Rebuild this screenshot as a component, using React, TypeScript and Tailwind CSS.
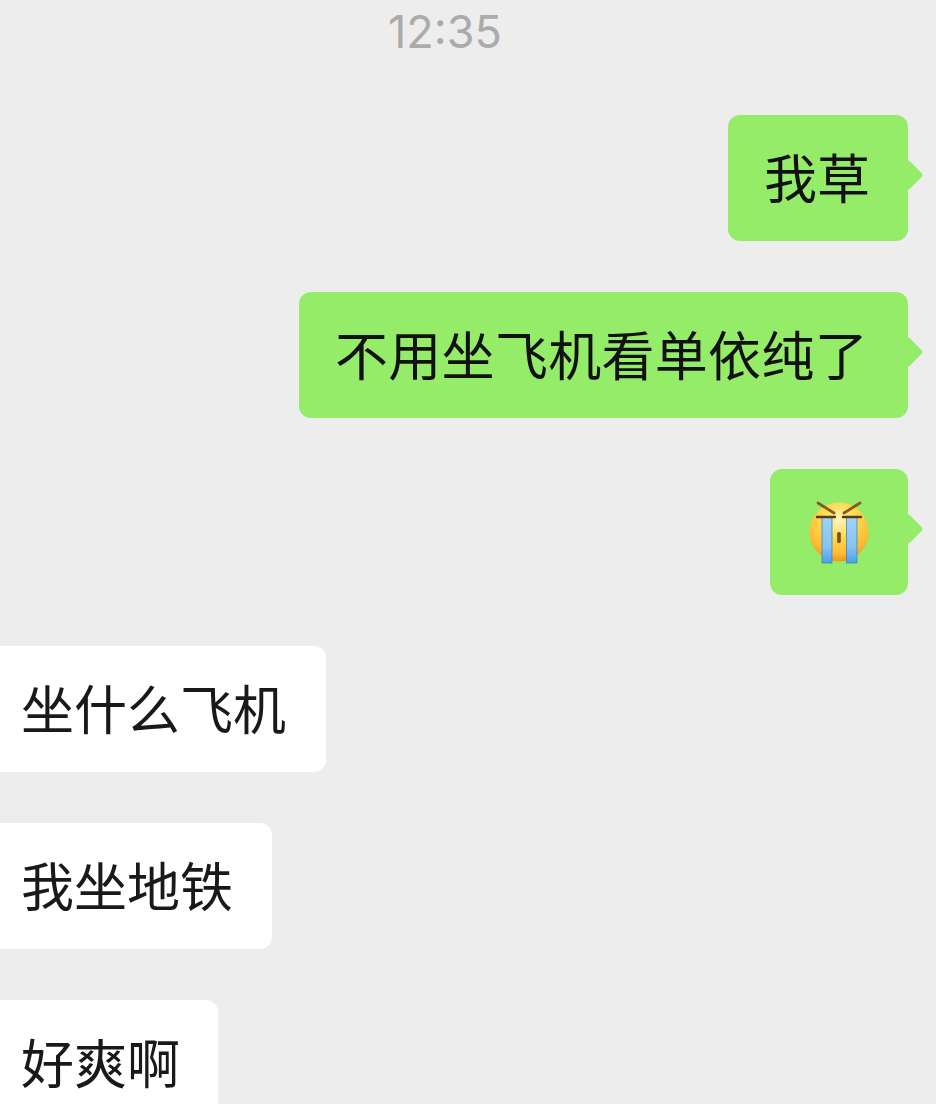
const Me = ({ children, className }: { children: React.ReactNode; className: string }) => (
  <div className={"relative flex items-center h-[126px] rounded-[12px] bg-[#95ec69] text-[#111111] " + className}>
    {children}
    <div className="absolute right-[-11px] top-[49px] w-[22px] h-[22px] rotate-45 rounded-[3px] bg-[#95ec69]"></div>
  </div>
);

const Other = ({ text, className }: { text: string; className: string }) => (
  <div className={"flex items-center h-[126px] pb-[3px] rounded-r-[12px] bg-white text-[#191919] pl-[21px] " + className}>
    {text}
  </div>
);

const CryFace = () => (
  <svg width="64" height="70" viewBox="0 0 64 70">
    <defs>
      <radialGradient id="face" cx="50%" cy="30%" r="68%">
        <stop offset="0%" stopColor="#fff6c0" />
        <stop offset="40%" stopColor="#ffdc55" />
        <stop offset="85%" stopColor="#fcb92e" />
        <stop offset="100%" stopColor="#f09a20" />
      </radialGradient>
      <linearGradient id="tear" x1="0" y1="0" x2="0" y2="1">
        <stop offset="0%" stopColor="#9dd3f8" />
        <stop offset="65%" stopColor="#86c4f3" />
        <stop offset="100%" stopColor="#4b9fe6" />
      </linearGradient>
    </defs>
    <circle cx="32" cy="35" r="29.5" fill="url(#face)" />
    <rect x="15" y="20" width="10" height="46" fill="url(#tear)" stroke="#3f86b8" strokeWidth="0.8" />
    <rect x="39.5" y="20" width="10.5" height="46" fill="url(#tear)" stroke="#3f86b8" strokeWidth="0.8" />
    <path d="M11 6l16 10M53 6l-16 10" stroke="#8a5a1c" strokeWidth="2.8" strokeLinecap="round" />
    <path d="M10 20h18M36 20h18" stroke="#5a3a14" strokeWidth="2.4" strokeLinecap="round" />
    <rect x="30.2" y="35" width="3.6" height="11" rx="1.6" fill="#7a4a12" />
  </svg>
);

export default function App() {
  return (
    <div className="w-[936px] h-[1104px] overflow-hidden bg-[#ededed] text-[53px] leading-none" style={{ fontFamily: '"Noto Sans CJK SC", "Liberation Sans", sans-serif' }}>
      <div className="h-[115px] pt-[9px] pr-[46px] text-center">
        <span className="block text-[45px] leading-[46px] text-[#ababab]" style={{ fontFamily: '"Inter", sans-serif' }}>12:35</span>
      </div>
      <div className="flex flex-col items-end gap-[51px] pr-[28px]">
        <Me className="w-[180px] pl-[36px] pb-[3px]"><span className="whitespace-nowrap">我草</span></Me>
        <Me className="w-[609px] pl-[36px] pb-[3px]"><span className="tracking-[0.3px] whitespace-nowrap">不用坐飞机看单依纯了</span></Me>
        <Me className="w-[138px] justify-center"><CryFace /></Me>
      </div>
      <div className="flex flex-col items-start gap-[51px] mt-[51px]">
        <Other className="w-[326px]" text="坐什么飞机" />
        <Other className="w-[272px]" text="我坐地铁" />
        <Other className="w-[218px]" text="好爽啊" />
      </div>
    </div>
  );
}
